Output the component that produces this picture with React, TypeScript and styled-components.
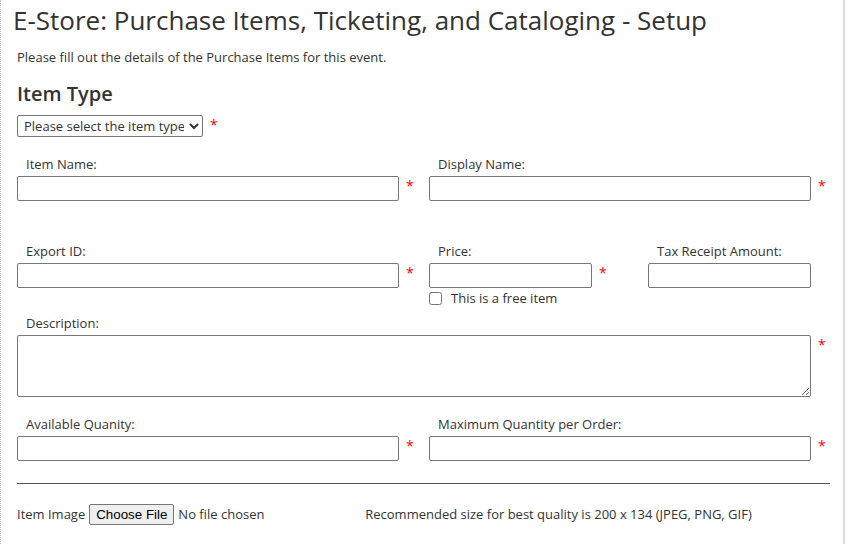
import React from "react"
import styled, { createGlobalStyle } from "styled-components"

const GlobalStyle = createGlobalStyle`
  html, body {
    margin: 0;
    padding: 0;
    background: #fff;
  }
  body {
    font-family: "Open Sans", "Liberation Sans", sans-serif;
    color: #333;
  }
`

const Page = styled.div`
  box-sizing: border-box;
  width: 845px;
  height: 544px;
  border-left: 1px dotted #c8c8c8;
  border-right: 2px solid #dcdcdc;
  padding-left: 16px;
  overflow: hidden;
`

const Title = styled.h1`
  margin: 0 0 0 -4px;
  padding-top: 3px;
  font-size: 26px;
  font-weight: 400;
  line-height: 35px;
  color: #333;
`

const Intro = styled.p`
  margin: 10px 0 0;
  font-size: 13px;
  line-height: 18px;
`

const SectionHeading = styled.h2`
  margin: 14px 0 0;
  font-size: 20px;
  font-weight: 600;
  line-height: 27px;
  color: #333;
`

const SelectLine = styled.div`
  display: flex;
  align-items: flex-start;
  margin-top: 8px;
`

const TypeSelect = styled.select`
  box-sizing: border-box;
  width: 186px;
  height: 22px;
  font-family: "Open Sans", sans-serif;
  font-size: 13px;
  color: #333;
  border: 1px solid #767676;
  border-radius: 2px;
  background: #fff;
  padding: 0 2px;
`

const FieldRow = styled.div<{ $cols: string; $after: number; $before?: number }>`
  display: grid;
  grid-template-columns: ${p => p.$cols};
  align-items: start;
  margin-top: ${p => p.$before ?? 0}px;
  margin-bottom: ${p => p.$after}px;
`

const Field = styled.div`
  display: flex;
  flex-direction: column;
`

const Label = styled.label`
  padding-left: 9px;
  margin-bottom: 3px;
  font-size: 13px;
  line-height: 18px;
  color: #333;
`

const InputLine = styled.div`
  display: flex;
  align-items: flex-start;
`

const TextInput = styled.input<{ $w: number }>`
  box-sizing: border-box;
  width: ${p => p.$w}px;
  height: 25px;
  margin: 0;
  border: 1px solid #767676;
  border-radius: 2px;
  font-family: "Open Sans", sans-serif;
  font-size: 13px;
  padding: 1px 4px;
`

const TextArea = styled.textarea`
  box-sizing: border-box;
  display: block;
  width: 794px;
  height: 62px;
  margin: 0;
  border: 1px solid #767676;
  border-radius: 2px;
  font-family: "Open Sans", sans-serif;
  font-size: 13px;
`

const Required = styled.span`
  margin-left: 7px;
  font-size: 14px;
  line-height: 20px;
  color: #f00;
`

const CheckLine = styled.label`
  display: flex;
  align-items: center;
  margin-top: 1px;
  font-size: 13px;
  line-height: 18px;
`

const Check = styled.input`
  width: 13px;
  height: 13px;
  margin: 0 9px 0 0;
`

const Rule = styled.hr`
  width: 813px;
  margin: 22px 0 0;
  border: none;
  border-top: 1px solid #555;
`

const FileLine = styled.div`
  display: flex;
  align-items: center;
  height: 22px;
  margin-top: 19px;
  font-size: 13px;
`

const FileInput = styled.input`
  width: 276px;
  margin-left: 4px;
  font-family: "Open Sans", sans-serif;
  font-size: 13px;
  color: #333;

  &::file-selector-button {
    font-family: "Liberation Sans", Arial, sans-serif;
    font-size: 13.33px;
    color: #000;
    background: #efefef;
    border: 1px solid #767676;
    border-radius: 2px;
    padding: 1px 6px;
    height: 21px;
    margin-right: 4px;
  }
`

const Note = styled.span`
  color: #333;
`

const Star = () => <Required>*</Required>

type InputFieldProps = {
  label: string
  width: number
  required?: boolean
}

const InputField = ({ label, width, required }: InputFieldProps) => (
  <Field>
    <Label>{label}</Label>
    <InputLine>
      <TextInput type="text" $w={width} />
      {required && <Star />}
    </InputLine>
  </Field>
)

const App = () => (
  <Page>
    <GlobalStyle />
    <Title>E-Store: Purchase Items, Ticketing, and Cataloging - Setup</Title>
    <Intro>Please fill out the details of the Purchase Items for this event.</Intro>

    <SectionHeading>Item Type</SectionHeading>
    <SelectLine>
      <TypeSelect defaultValue="">
        <option value="">Please select the item type</option>
        <option value="ticket">Ticket</option>
        <option value="item">Item</option>
      </TypeSelect>
      <Required>*</Required>
    </SelectLine>

    <FieldRow $cols="412px 412px" $before={18} $after={41}>
      <InputField label="Item Name:" width={382} required />
      <InputField label="Display Name:" width={382} required />
    </FieldRow>

    <FieldRow $cols="412px 219px 193px" $after={7}>
      <InputField label="Export ID:" width={382} required />
      <Field>
        <Label>Price:</Label>
        <InputLine>
          <TextInput type="text" $w={163} />
          <Star />
        </InputLine>
        <CheckLine>
          <Check type="checkbox" />
          This is a free item
        </CheckLine>
      </Field>
      <InputField label="Tax Receipt Amount:" width={163} />
    </FieldRow>

    <FieldRow $cols="824px" $after={18}>
      <Field>
        <Label>Description:</Label>
        <InputLine>
          <TextArea />
          <Star />
        </InputLine>
      </Field>
    </FieldRow>

    <FieldRow $cols="412px 412px" $after={0}>
      <InputField label="Available Quanity:" width={382} required />
      <InputField label="Maximum Quantity per Order:" width={382} required />
    </FieldRow>

    <Rule />

    <FileLine>
      Item Image
      <FileInput type="file" />
      <Note>Recommended size for best quality is 200 x 134 (JPEG, PNG, GIF)</Note>
    </FileLine>
  </Page>
)

export default App
